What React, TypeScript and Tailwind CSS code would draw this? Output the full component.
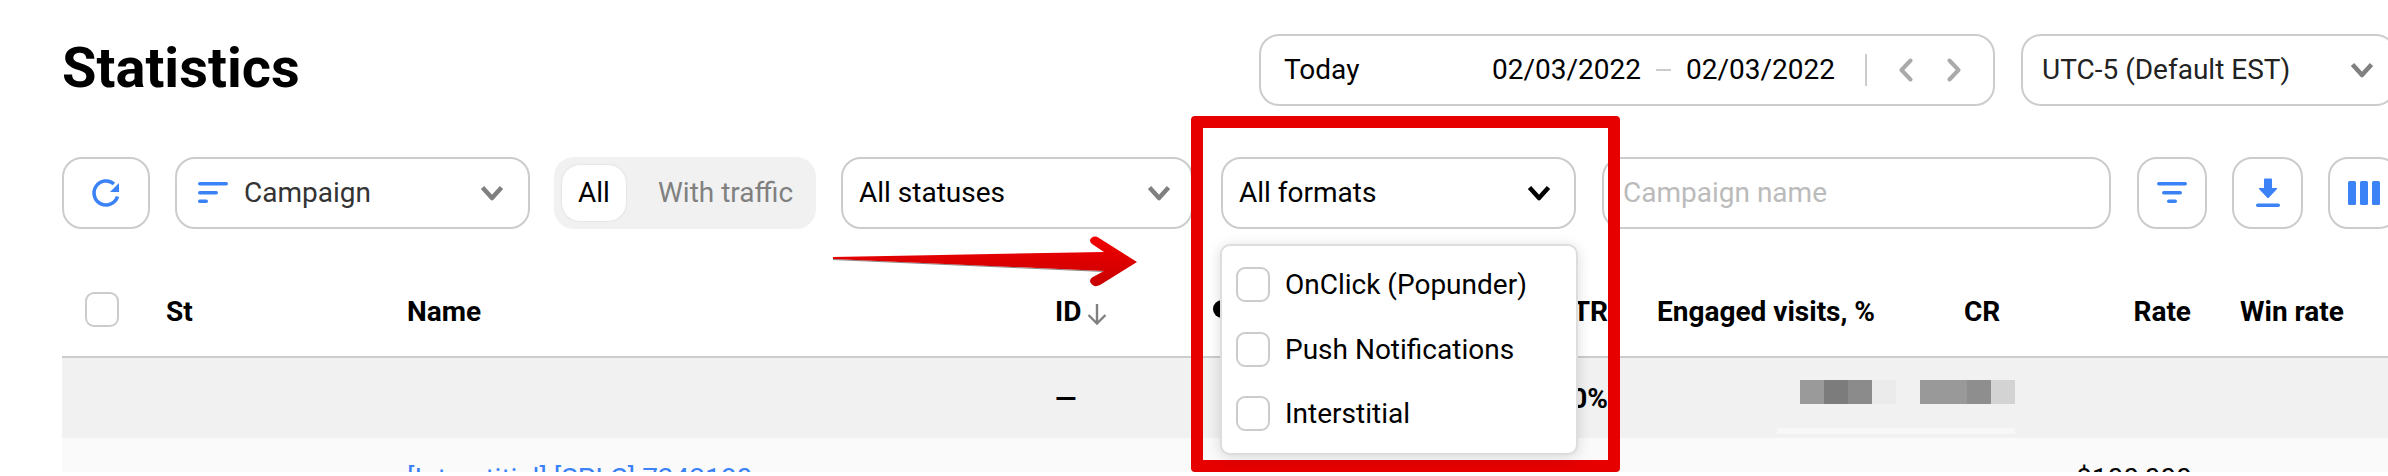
function Chevron({ className }: { className: string }) {
    return (
        <svg width="24" height="16" viewBox="0 0 24 16" fill="none" className={className}>
            <path d="M2.5 2.5 L12 13 L21.5 2.5" stroke="currentColor" strokeWidth="4.5" strokeLinejoin="round" />
        </svg>
    );
}

function SideChevron({ d, className }: { d: string; className: string }) {
    return (
        <svg width="14" height="24" viewBox="0 0 14 24" fill="none" className={className}>
            <path d={d} stroke="#aaa" strokeWidth="4" strokeLinecap="round" strokeLinejoin="round" />
        </svg>
    );
}

function Check() {
    return <div className="h-[35px] w-[34px] shrink-0 rounded-[9px] border-2 border-[#ccc] bg-white" />;
}

function RefreshIcon() {
    return (
        <svg width="32" height="32" viewBox="0 0 32 32" fill="none">
            <path d="M27.5 19.5 A12 12 0 1 1 24 7" stroke="#3b82f6" strokeWidth="3.5" />
            <polygon points="29,6 29,15 20,15" fill="#3b82f6" />
        </svg>
    );
}

function SortIcon() {
    return (
        <svg width="30" height="24" viewBox="0 0 30 24" fill="#3b82f6">
            <rect x="0" y="1" width="30" height="3.5" rx="1.75" />
            <rect x="0" y="10" width="20" height="3.5" rx="1.75" />
            <rect x="0" y="18.5" width="10" height="3.5" rx="1.75" />
        </svg>
    );
}

function FilterIcon() {
    return (
        <svg width="30" height="24" viewBox="0 0 30 24" fill="#3b82f6">
            <rect x="0" y="1" width="30" height="3.5" rx="1.75" />
            <rect x="5" y="10" width="20" height="3.5" rx="1.75" />
            <rect x="10" y="18.5" width="10" height="3.5" rx="1.75" />
        </svg>
    );
}

function DownloadIcon() {
    return (
        <svg width="24" height="30" viewBox="0 0 24 30" fill="#3b82f6">
            <path d="M8 1.5 Q8 0.5 9 0.5 H15 Q16 0.5 16 1.5 V10 H20.5 Q21.5 10 21 11 L12.5 20 Q12 20.5 11.5 20 L3 11 Q2.5 10 3.5 10 H8 Z" />
            <rect x="0" y="25.5" width="24" height="3.5" rx="1.75" />
        </svg>
    );
}

function ColumnsIcon() {
    return (
        <svg width="32" height="24" viewBox="0 0 32 24" fill="#3b82f6">
            <rect x="0" y="0" width="8" height="24" rx="1.5" />
            <rect x="12" y="0" width="8" height="24" rx="1.5" />
            <rect x="24" y="0" width="8" height="24" rx="1.5" />
        </svg>
    );
}

function SortArrow() {
    return (
        <svg width="20" height="22" viewBox="0 0 20 22" fill="none" className="ml-[6px] mt-[4px]">
            <path d="M10 1 V20.5 M1.5 12 L10 20.5 L18.5 12" stroke="#808080" strokeWidth="2.4" />
        </svg>
    );
}

function RedArrow() {
    return (
        <svg width="310" height="56" viewBox="0 0 310 56" className="absolute left-[830px] top-[234px]">
            <defs>
                <linearGradient id="arrowFill" x1="0" y1="0" x2="0" y2="1">
                    <stop offset="0" stopColor="#f20000" />
                    <stop offset="1" stopColor="#c80000" />
                </linearGradient>
            </defs>
            <path d="M3 25.5 L274 37.5" stroke="#888" strokeWidth="1" />
            <path
                d="M3 23 L274 18 L262 10 Q258 6 262 3.5 Q265 1.5 269 4 L307 28 L270 51 Q265 53.5 262 50.5 Q258 47 262 43.5 L274 37 L3 25 Z"
                fill="url(#arrowFill)"
            />
        </svg>
    );
}

const formats = ["OnClick (Popunder)", "Push Notifications", "Interstitial"];

export default function App() {
    return (
        <div className="h-[476px] w-[2388px] overflow-hidden bg-white">
            <div className="relative h-[472px] overflow-hidden pl-[62px] font-['Roboto',sans-serif] text-[28px] text-black">

                {/* title + date range */}
                <div className="flex h-[157px] pt-[34px]">
                    <h1 className="w-[1197px] shrink-0 pt-[3px] text-[56px] font-bold leading-[62px]">Statistics</h1>

                    <div className="flex h-[72px] w-[736px] shrink-0 items-center whitespace-nowrap rounded-[20px] border-2 border-[#ccc] pl-[23px]">
                        <span className="w-[208px]">Today</span>
                        <span className="w-[149px]">02/03/2022</span>
                        <span className="mx-[15px] h-[2px] w-[15px] bg-[#ccc]" />
                        <span className="w-[149px]">02/03/2022</span>
                        <span className="ml-[30px] h-[32px] w-[2px] bg-[#ccc]" />
                        <SideChevron d="M11.5 2.5 L2.5 12 L11.5 21.5" className="ml-[32px]" />
                        <SideChevron d="M2.5 2.5 L11.5 12 L2.5 21.5" className="ml-[34px]" />
                    </div>

                    <div className="ml-[26px] flex h-[72px] w-[375px] shrink-0 items-center whitespace-nowrap rounded-[20px] border-2 border-[#ccc] pl-[19px] text-[#222]">
                        <span className="w-[308px]">UTC-5 (Default EST)</span>
                        <Chevron className="text-[#808080]" />
                    </div>
                </div>

                {/* toolbar */}
                <div className="flex h-[72px]">
                    <button className="flex w-[88px] shrink-0 items-center justify-center rounded-[20px] border-2 border-[#ccc]">
                        <RefreshIcon />
                    </button>

                    <div className="ml-[25px] flex w-[355px] shrink-0 items-center rounded-[20px] border-2 border-[#ccc] pl-[21px] text-[#333]">
                        <SortIcon />
                        <span className="ml-[16px] w-[236px]">Campaign</span>
                        <Chevron className="text-[#808080]" />
                    </div>

                    <div className="ml-[24px] flex w-[262px] shrink-0 items-center whitespace-nowrap rounded-[20px] bg-[#f1f1f1] pl-[8px]">
                        <span className="flex h-[56px] w-[64px] items-center justify-center rounded-[18px] bg-white shadow-[0_0_2px_rgba(0,0,0,0.15)]">All</span>
                        <span className="ml-[32px] text-[#808080]">With traffic</span>
                    </div>

                    <div className="ml-[25px] flex w-[352px] shrink-0 items-center rounded-[20px] border-2 border-[#ccc] pl-[16px]">
                        <span className="w-[288px]">All statuses</span>
                        <Chevron className="text-[#808080]" />
                    </div>

                    <div className="ml-[28px] flex w-[355px] shrink-0 items-center rounded-[20px] border-2 border-[#ccc] pl-[16px]">
                        <span className="w-[288px]">All formats</span>
                        <Chevron className="text-black" />
                    </div>

                    <input
                        placeholder="Campaign name"
                        className="ml-[26px] w-[509px] shrink-0 rounded-[20px] border-2 border-[#ccc] pl-[19px] outline-none placeholder:text-[#bbb]"
                    />

                    <button className="ml-[26px] flex w-[70px] shrink-0 items-center justify-center rounded-[20px] border-2 border-[#ccc]">
                        <FilterIcon />
                    </button>
                    <button className="ml-[25px] flex w-[71px] shrink-0 items-center justify-center rounded-[20px] border-2 border-[#ccc]">
                        <DownloadIcon />
                    </button>
                    <button className="ml-[25px] flex w-[71px] shrink-0 items-center justify-center rounded-[20px] border-2 border-[#ccc]">
                        <ColumnsIcon />
                    </button>
                </div>

                {/* table */}
                <div className="flex h-[129px] w-[2326px] items-center whitespace-nowrap border-b-2 border-[#ccc] pb-[13px] pt-[46px] font-bold">
                    <div className="w-[104px] shrink-0 pl-[23px]">
                        <Check />
                    </div>
                    <div className="w-[241px] shrink-0 pt-[6px]">St</div>
                    <div className="w-[648px] shrink-0 pt-[6px]">Name</div>
                    <div className="flex w-[158px] shrink-0 items-center pt-[6px]">
                        ID
                        <SortArrow />
                    </div>
                    <div className="h-[18px] w-[18px] shrink-0 rounded-full bg-black" />
                    <div className="w-[377px] shrink-0 pt-[6px] text-right">CTR</div>
                    <div className="ml-[49px] w-[307px] shrink-0 pt-[6px]">Engaged visits, %</div>
                    <div className="w-[130px] shrink-0 pt-[6px]">CR</div>
                    <div className="w-[97px] shrink-0 pt-[6px] text-right">Rate</div>
                    <div className="ml-[49px] shrink-0 pt-[6px]">Win rate</div>
                </div>

                <div className="flex h-[80px] w-[2326px] bg-[#f1f1f1] font-bold">
                    <div className="w-[993px] shrink-0" />
                    <div className="flex w-[553px] shrink-0 justify-between pt-[24px] leading-[33px]">
                        <span>—</span>
                        <span>0%</span>
                    </div>
                    <div className="flex w-[407px] shrink-0 flex-col items-end pt-[22px]">
                        <div className="flex h-[24px]">
                            <div className="w-[24px] bg-[#9a9a9a]" />
                            <div className="w-[24px] bg-[#7c7c7c]" />
                            <div className="w-[24px] bg-[#8b8b8b]" />
                            <div className="w-[24px] bg-[#ebebeb]" />
                            <div className="ml-[24px] w-[47px] bg-[#999]" />
                            <div className="w-[24px] bg-[#8e8e8e]" />
                            <div className="w-[24px] bg-[#d3d3d3]" />
                        </div>
                        <div className="mt-[24px] h-[6px] w-[238px] bg-[#f7f7f7]" />
                    </div>
                </div>

                <div className="h-[34px] w-[2326px] whitespace-nowrap bg-[#fafafa]">
                    <div className="flex pt-[24px] leading-[33px]">
                        <span className="ml-[345px] w-[1669px] text-[#3b82f6]">[Interstitial] [SPLC] 7342180</span>
                        <span className="w-[115px] text-right">$100,000</span>
                    </div>
                </div>

                {/* annotation overlays */}
                <RedArrow />
                <div className="absolute left-[1191px] top-[116px] h-[356px] w-[429px] rounded-[4px] border-[12px] border-[#e60000]" />

                {/* open dropdown */}
                <div className="absolute left-[1220px] top-[244px] flex h-[211px] w-[358px] flex-col gap-[29.5px] rounded-[10px] border-2 border-[#ddd] bg-white pl-[14px] pt-[21px] shadow-[0_2px_14px_rgba(0,0,0,0.14)]">
                    {formats.map((f) => (
                        <div key={f} className="flex items-center gap-[15px] leading-[35px]">
                            <Check />
                            <span>{f}</span>
                        </div>
                    ))}
                </div>
            </div>
        </div>
    );
}
